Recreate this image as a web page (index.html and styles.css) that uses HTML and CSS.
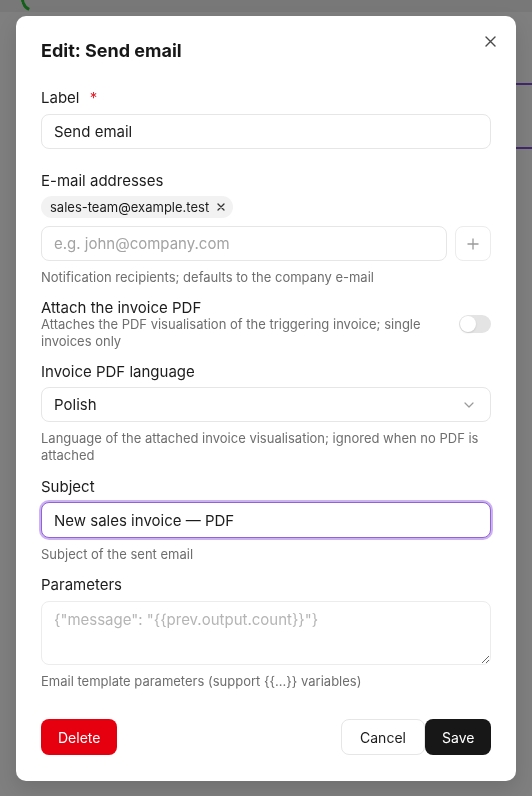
FILE: index.html
```html
<!DOCTYPE html>
<html lang="en">
<head>
<meta charset="utf-8">
<title>Edit: Send email</title>
<link rel="stylesheet" href="styles.css">
</head>
<body>
<div class="page">
  <div class="page-header"><span class="page-spinner"></span></div>
  <span class="page-line page-line-1"></span>
  <span class="page-line page-line-2"></span>
</div>
<div class="overlay">
  <div class="modal" role="dialog" aria-labelledby="dlg-title">
    <div class="modal-head">
      <h2 id="dlg-title" class="modal-title">Edit: Send email</h2>
      <button class="close-btn" type="button" aria-label="Close">
        <svg width="11" height="11" viewBox="0 0 11 11"><path d="M1 1L10 10M10 1L1 10" stroke="#4a4a4a" stroke-width="1.4" stroke-linecap="round"/></svg>
      </button>
    </div>

    <div class="field field-label">
      <label class="label">Label <span class="req">*</span></label>
      <input class="input" type="text" value="Send email">
    </div>

    <div class="field">
      <label class="label">E-mail addresses</label>
      <div class="chips">
        <span class="chip">sales-team@example.test
          <svg class="chip-x" width="8" height="8" viewBox="0 0 8 8"><path d="M1 1L7 7M7 1L1 7" stroke="#333" stroke-width="1.3" stroke-linecap="round"/></svg>
        </span>
      </div>
      <div class="input-row">
        <input class="input" type="text" placeholder="e.g. john@company.com">
        <button class="add-btn" type="button" aria-label="Add">
          <svg width="12" height="12" viewBox="0 0 12 12"><path d="M6 0.5V11.5M0.5 6H11.5" stroke="#9a9a9a" stroke-width="1.3"/></svg>
        </button>
      </div>
      <p class="help">Notification recipients; defaults to the company e-mail</p>
    </div>

    <div class="toggle-row">
      <div class="toggle-text">
        <div class="toggle-label">Attach the invoice PDF</div>
        <p class="toggle-desc">Attaches the PDF visualisation of the triggering invoice; single invoices only</p>
      </div>
      <span class="switch"><span class="knob"></span></span>
    </div>

    <div class="field field-lang">
      <label class="label">Invoice PDF language</label>
      <div class="select">
        <span>Polish</span>
        <svg width="10" height="6" viewBox="0 0 10 6"><path d="M1 1L5 5L9 1" fill="none" stroke="#9a9a9a" stroke-width="1.2" stroke-linecap="round" stroke-linejoin="round"/></svg>
      </div>
      <p class="help">Language of the attached invoice visualisation; ignored when no PDF is attached</p>
    </div>

    <div class="field">
      <label class="label">Subject</label>
      <input class="input input-focus" type="text" value="New sales invoice — PDF">
      <p class="help">Subject of the sent email</p>
    </div>

    <div class="field">
      <label class="label label-params">Parameters</label>
      <textarea class="textarea" placeholder="{&quot;message&quot;: &quot;{{prev.output.count}}&quot;}"></textarea>
      <p class="help">Email template parameters (support {{...}} variables)</p>
    </div>

    <div class="modal-foot">
      <button class="btn btn-danger" type="button">Delete</button>
      <div class="foot-right">
        <button class="btn btn-outline" type="button">Cancel</button>
        <button class="btn btn-dark" type="button">Save</button>
      </div>
    </div>
  </div>
</div>
</body>
</html>
```

FILE: styles.css
```css
* { box-sizing: border-box; }

html, body {
  margin: 0;
  padding: 0;
}

body {
  width: 532px;
  height: 796px;
  overflow: hidden;
  background: #7f7f7f;
  font-family: "Inter", "Noto Sans", sans-serif;
  color: #1c1c1c;
}

.page {
  position: relative;
  height: 796px;
}

.page-header {
  position: relative;
  height: 12px;
  background: #787878;
}

.page-spinner {
  position: absolute;
  left: 21px;
  top: -14px;
  width: 26px;
  height: 26px;
  border-radius: 50%;
  border: 3px solid transparent;
  border-left-color: #14601a;
  transform: rotate(-20deg);
}

.page-line {
  position: absolute;
  right: 0;
  width: 20px;
  height: 2px;
  background: #42266f;
}
.page-line-1 { top: 83px; }
.page-line-2 { top: 147px; }

/* overlay + modal */
.overlay {
  position: fixed;
  inset: 0;
  display: flex;
  justify-content: center;
  align-items: flex-start;
  padding-top: 16px;
}

.modal {
  position: relative;
  width: 500px;
  background: #fff;
  border-radius: 10px;
  padding: 22px 25px 26px;
  box-shadow: 0 8px 20px rgba(0, 0, 0, 0.12);
}

.modal-head {
  margin-bottom: 24px;
}

.modal-title {
  margin: 0;
  font-size: 18px;
  line-height: 26px;
  font-weight: 700;
  color: #171717;
}

.close-btn {
  position: absolute;
  top: 20px;
  right: 20px;
  width: 11px;
  height: 11px;
  padding: 0;
  border: 0;
  background: none;
  display: flex;
}

.field {
  margin-bottom: 12px;
}
.field-label {
  margin-bottom: 22px;
}
.field-lang {
  margin-bottom: 13px;
}

.label {
  display: block;
  font-size: 15px;
  line-height: 20px;
  margin-bottom: 5px;
  color: #1c1c1c;
}
.field-label .label,
.label-params {
  margin-bottom: 6px;
}

.req {
  color: #e0202a;
  margin-left: 6px;
}

.input {
  display: block;
  width: 100%;
  height: 35px;
  border: 1px solid #e6e6e6;
  border-radius: 8px;
  padding: 0 12px;
  font-family: inherit;
  font-size: 15px;
  color: #1c1c1c;
  background: #fff;
  outline: none;
}
.input::placeholder { color: #a3a3a3; }

.input-focus {
  height: 36px;
  border: 1.5px solid #9263d8;
  box-shadow: 0 0 0 2px #cdb2f2;
}

.chips {
  display: flex;
  margin-bottom: 8px;
}

.chip {
  display: inline-flex;
  align-items: center;
  gap: 8px;
  height: 22px;
  padding: 0 8px 0 9px;
  border-radius: 11px;
  background: #f2f2f2;
  font-size: 13px;
  color: #1c1c1c;
}

.input-row {
  display: flex;
  gap: 8px;
}
.input-row .input { flex: 1; }

.add-btn {
  flex: none;
  width: 36px;
  height: 35px;
  border: 1px solid #ececec;
  border-radius: 8px;
  background: #fff;
  display: flex;
  align-items: center;
  justify-content: center;
  padding: 0;
}

.help {
  margin: 8px 0 0;
  font-size: 13px;
  line-height: 17px;
  color: #6e6e6e;
}

.toggle-row {
  display: flex;
  align-items: center;
  justify-content: space-between;
  gap: 20px;
  margin-bottom: 12px;
}

.toggle-text { max-width: 390px; }

.toggle-label {
  font-size: 15px;
  line-height: 18px;
  padding-top: 1px;
}

.toggle-desc {
  margin: -1px 0 0;
  font-size: 13px;
  line-height: 17px;
  color: #6e6e6e;
}

.switch {
  flex: none;
  position: relative;
  width: 32px;
  height: 18px;
  border-radius: 9px;
  background: #e4e4e4;
  display: flex;
  align-items: center;
  padding: 1px;
}

.knob {
  width: 16px;
  height: 16px;
  border-radius: 50%;
  background: #fff;
  box-shadow: 0 1px 2px rgba(0, 0, 0, 0.12);
}

.select {
  display: flex;
  align-items: center;
  justify-content: space-between;
  height: 35px;
  border: 1px solid #e6e6e6;
  border-radius: 8px;
  padding: 0 16px 0 12px;
  font-size: 15px;
}

.textarea {
  display: block;
  width: 100%;
  height: 64px;
  border: 1px solid #ececec;
  border-radius: 8px;
  padding: 8px 12px;
  font-family: inherit;
  font-size: 15px;
  resize: vertical;
  outline: none;
}
.textarea::placeholder { color: #b5b5b5; }

.modal-foot {
  display: flex;
  justify-content: space-between;
  align-items: center;
  margin-top: 29px;
}

.foot-right {
  display: flex;
}

.btn {
  height: 36px;
  border-radius: 8px;
  font-family: inherit;
  font-size: 14px;
  padding: 0 16px;
  border: 1px solid transparent;
  cursor: pointer;
}

.btn-danger {
  width: 76px;
  background: #e6000f;
  color: #fff;
}

.btn-outline {
  width: 84px;
  background: #fff;
  border-color: #e6e6e6;
  color: #1c1c1c;
}

.btn-dark {
  width: 66px;
  background: #171717;
  color: #fff;
}
```
